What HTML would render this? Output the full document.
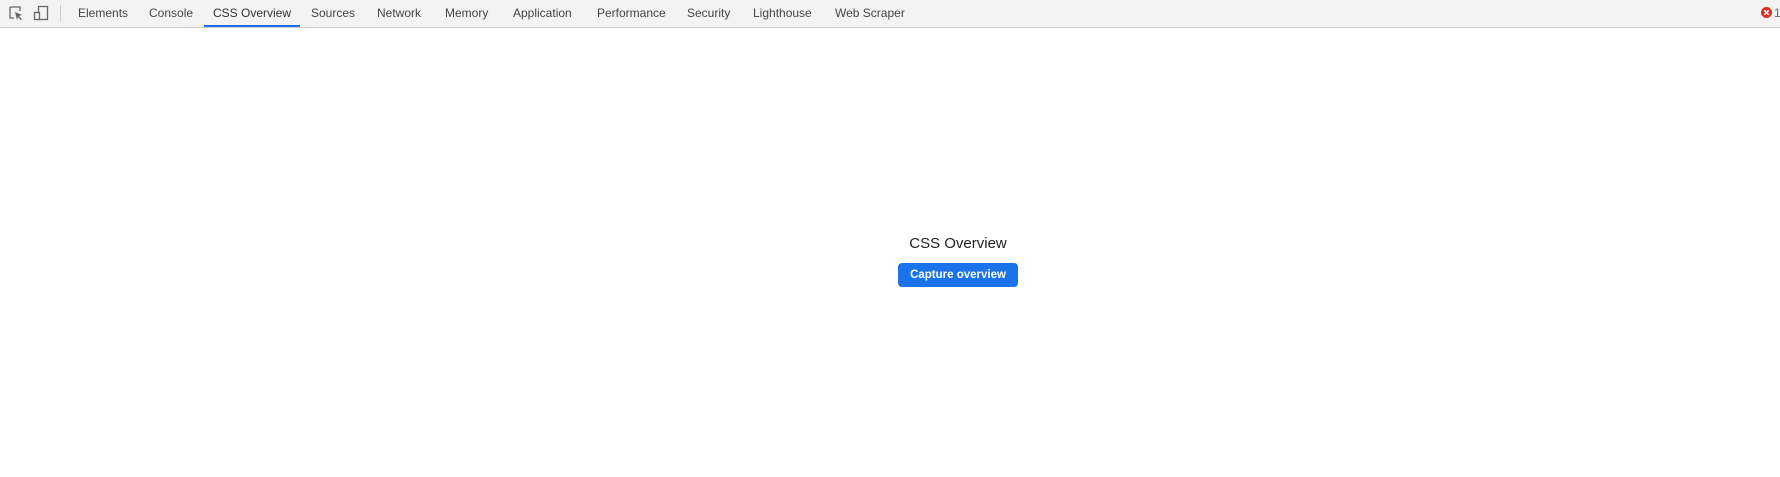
<!DOCTYPE html>
<html><head><style>
body{margin:0;width:1780px;height:477px;background:#fff;font-family:"Liberation Sans",sans-serif;position:relative;overflow:hidden}
.bar{position:absolute;left:0;top:0;width:1780px;height:27px;background:#f3f3f3;border-bottom:1px solid #cbcbcb}
.tab{position:absolute;top:0;height:27px;line-height:26px;font-size:12px;color:#444;white-space:nowrap}
.sel{border-bottom:2px solid #1a73e8;box-sizing:border-box;color:#333}
.sep{position:absolute;left:60px;top:5px;width:1px;height:17px;background:#ccc}
h1{position:absolute;left:0;width:1916px;top:235px;margin:0;text-align:center;font-weight:normal;font-size:15px;color:#222}
.btn{position:absolute;left:898px;top:263px;width:120px;height:24px;background:#1a73e8;border-radius:4px;color:#fff;font-weight:bold;font-size:11.5px;line-height:24px;text-align:center}
</style></head><body>
<div class="bar">
<svg style="position:absolute;left:9px;top:6px" width="14" height="14" viewBox="0 0 14 14"><path d="M1 1h10v4M1 1v11h4" fill="none" stroke="#666" stroke-width="1.3"/><path d="M6 6l7 3-3 1 3 3-1 1-3-3-1 3z" fill="#666"/></svg>
<svg style="position:absolute;left:33px;top:5px" width="16" height="16" viewBox="0 0 16 16"><rect x="5.5" y="1.5" width="9" height="13" fill="none" stroke="#666" stroke-width="1.3"/><rect x="1.5" y="7.5" width="5" height="7" fill="#f3f3f3" stroke="#666" stroke-width="1.3"/></svg>
<div class="sep"></div>
<div class="tab" style="left:78px">Elements</div>
<div class="tab" style="left:149px">Console</div>
<div class="tab sel" style="left:204px;width:96px;text-align:center">CSS Overview</div>
<div class="tab" style="left:311px">Sources</div>
<div class="tab" style="left:377px">Network</div>
<div class="tab" style="left:445px">Memory</div>
<div class="tab" style="left:513px">Application</div>
<div class="tab" style="left:597px">Performance</div>
<div class="tab" style="left:687px">Security</div>
<div class="tab" style="left:753px">Lighthouse</div>
<div class="tab" style="left:835px">Web Scraper</div>
<svg style="position:absolute;left:1761px;top:7px" width="11" height="11" viewBox="0 0 11 11"><circle cx="5.5" cy="5.5" r="5.5" fill="#d93025"/><path d="M3.3 3.3l4.4 4.4M7.7 3.3l-4.4 4.4" stroke="#fff" stroke-width="1.5"/></svg>
<div class="tab" style="left:1774px;color:#666">1</div>
</div>
<h1>CSS Overview</h1>
<div class="btn">Capture overview</div>
</body></html>
